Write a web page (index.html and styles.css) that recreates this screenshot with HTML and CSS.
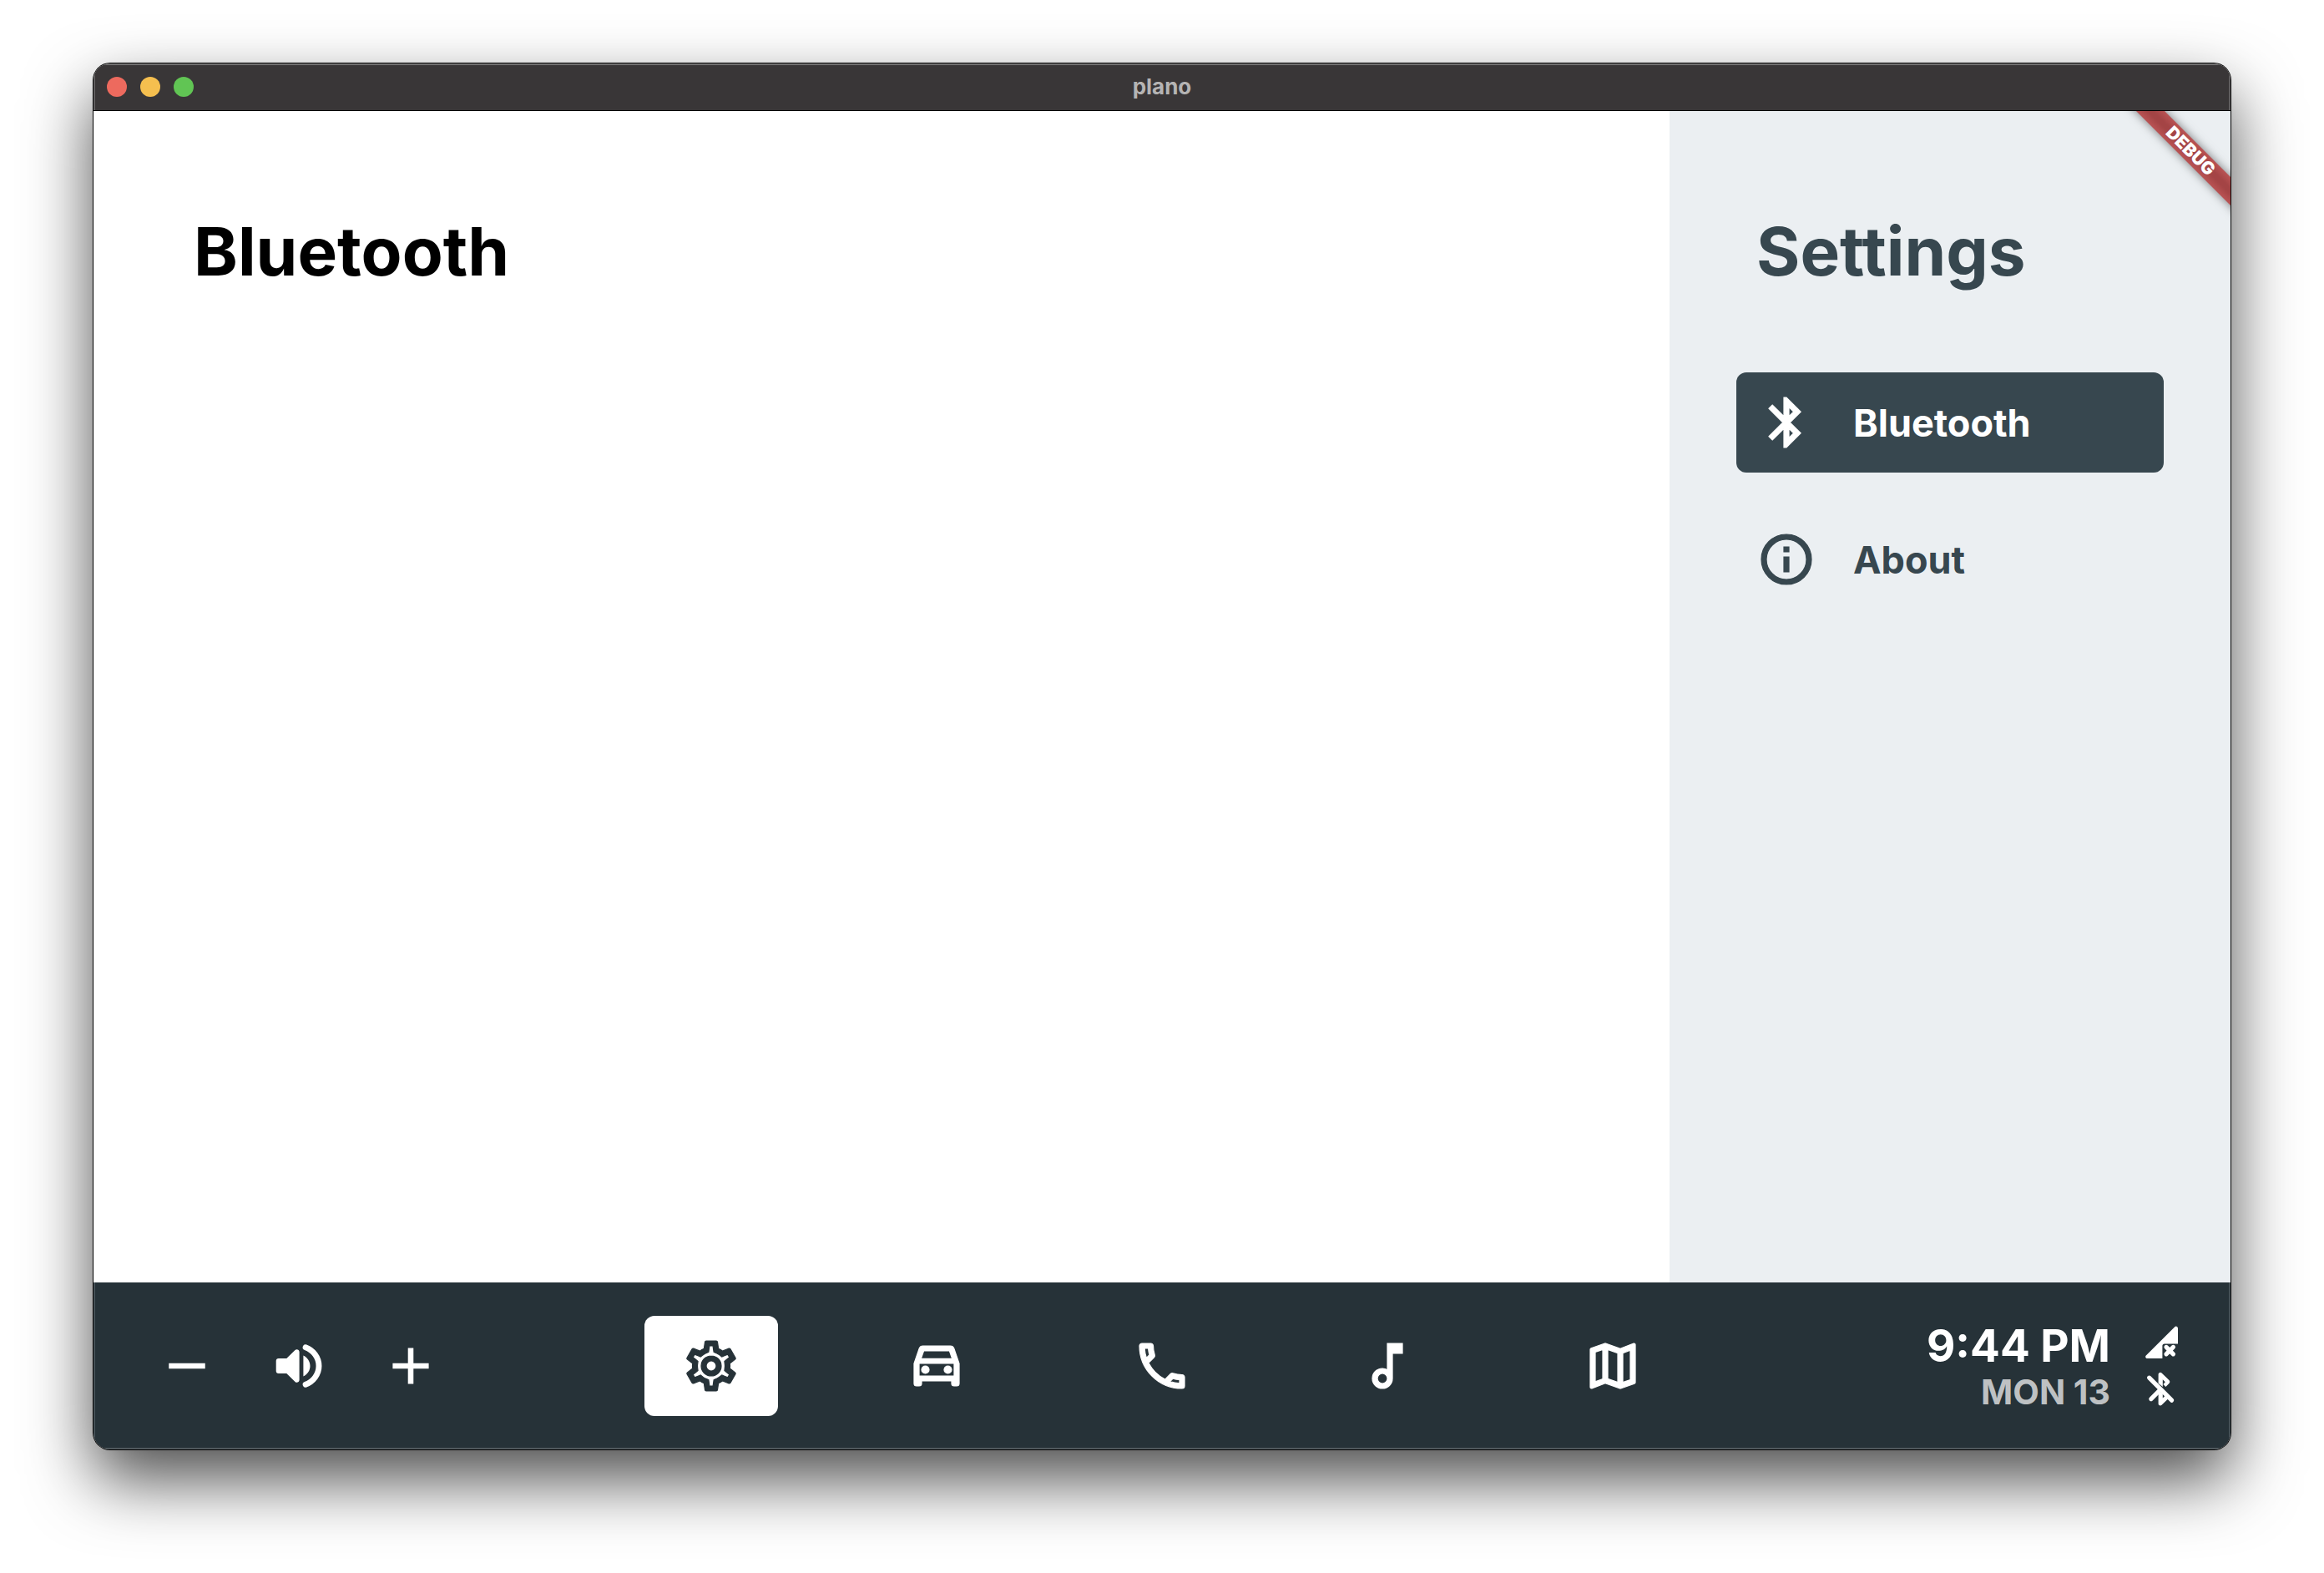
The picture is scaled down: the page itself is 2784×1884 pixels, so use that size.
FILE: index.html
```html
<!DOCTYPE html>
<html lang="en">
<head>
<meta charset="utf-8">
<title>plano</title>
<link rel="stylesheet" href="styles.css">
</head>
<body>
<div class="window">
  <header class="titlebar">
    <div class="lights">
      <button class="light close" aria-label="Close"></button>
      <button class="light minimize" aria-label="Minimize"></button>
      <button class="light zoom" aria-label="Zoom"></button>
    </div>
    <span class="title">plano</span>
  </header>
  <div class="body">
    <main class="content">
      <h1 class="heading">Bluetooth</h1>
    </main>
    <aside class="sidebar">
      <h2 class="heading">Settings</h2>
      <nav class="menu">
        <button class="item active">
          <svg class="icon bold" viewBox="0 0 24 24"><path d="M17.71 7.71L12 2h-1v7.590L6.410 5 5 6.410 10.590 12 5 17.590 6.410 19 11 14.410V22h1l5.710-5.710-4.300-4.290 4.300-4.290zM13 5.830l1.880 1.880L13 9.590V5.830zm1.880 10.460L13 18.170v-3.760l1.880 1.880z"/></svg>
          Bluetooth
        </button>
        <button class="item">
          <svg class="icon bold" viewBox="0 0 24 24"><path d="M11 7h2v2h-2zm0 4h2v6h-2zm1-9C6.480 2 2 6.480 2 12s4.480 10 10 10 10-4.480 10-10S17.520 2 12 2zm0 18c-4.410 0-8-3.590-8-8s3.590-8 8-8 8 3.590 8 8-3.590 8-8 8z"/></svg>
          About
        </button>
      </nav>
    </aside>
    <div class="corner"><span class="ribbon">DEBUG</span></div>
  </div>
  <footer class="dock">
    <div class="volume">
      <button class="key" aria-label="Volume down"><svg class="icon" viewBox="0 0 24 24"><path d="M4.750 10.900h14.500v2.200H4.750z"/></svg></button>
      <button class="key" aria-label="Mute"><svg class="icon" viewBox="0 0 24 24"><path d="M2.900 10v4c0 .6.400 1 1 1h3.200l3.400 3.300c.6.600 1.700.200 1.700-.7V6.400c0-.9-1.100-1.300-1.700-.7L7.100 9H3.900c-.6 0-1 .4-1 1zM16.500 12c0-1.800-1-3.300-2.700-4.200v8.400c1.700-.9 2.700-2.400 2.700-4.200z"/><path class="stroke" d="M14.700 4.600c3 1.100 5.300 4 5.300 7.400s-2.300 6.300-5.300 7.400"/></svg></button>
      <button class="key" aria-label="Volume up"><svg class="icon" viewBox="0 0 24 24"><path d="M4.800 10.900h6.100V4.800h2.200v6.100h6.100v2.200h-6.100v6.100h-2.200v-6.100H4.800z"/></svg></button>
    </div>
    <nav class="apps">
      <button class="app active" aria-label="Settings"><svg class="icon bold" viewBox="0 0 24 24"><path d="M19.430 12.980c.04-.32.070-.64.070-.98s-.03-.66-.07-.98l2.110-1.650c.19-.15.240-.42.120-.64l-2-3.460c-.09-.16-.26-.25-.44-.25-.06 0-.12.010-.17.030l-2.490 1c-.52-.4-1.080-.73-1.690-.98l-.38-2.650C14.460 2.180 14.250 2 14 2h-4c-.25 0-.46.180-.49.420l-.38 2.650c-.61.250-1.170.590-1.690.980l-2.490-1c-.06-.02-.12-.03-.18-.03-.17 0-.34.090-.43.250l-2 3.460c-.13.220-.07.490.120.640l2.110 1.650c-.04.320-.07.650-.07.980s.03.660.070.980l-2.110 1.650c-.19.150-.24.420-.12.640l2 3.460c.09.160.260.250.440.250.06 0 .12-.01.170-.03l2.490-1c.52.400 1.080.730 1.690.980l.38 2.650c.03.240.240.420.490.420h4c.25 0 .46-.18.490-.42l.38-2.650c.61-.25 1.170-.59 1.690-.98l2.490 1c.06.020.120.030.180.030.17 0 .34-.09.430-.25l2-3.460c.12-.22.070-.49-.12-.64l-2.110-1.650zm-1.980-1.710c.04.310.050.520.050.730s-.02.430-.05.730l-.14 1.130.890.700 1.080.840-.7 1.210-1.270-.51-1.040-.42-.9.680c-.43.320-.84.560-1.250.730l-1.060.430-.16 1.130-.2 1.350h-1.400l-.19-1.350-.16-1.130-1.060-.43c-.43-.18-.83-.41-1.230-.71l-.91-.7-1.060.430-1.270.510-.7-1.210 1.080-.84.890-.7-.14-1.130c-.03-.31-.05-.54-.05-.74s.02-.43.050-.73l.14-1.130-.89-.7-1.080-.84.700-1.210 1.270.510 1.040.420.900-.68c.43-.32.840-.56 1.250-.73l1.060-.43.160-1.130.2-1.350h1.390l.19 1.350.16 1.130 1.060.430c.43.180.830.410 1.230.710l.91.700 1.060-.43 1.270-.51.700 1.210-1.070.850-.89.700.14 1.130zM12 8c-2.210 0-4 1.790-4 4s1.790 4 4 4 4-1.790 4-4-1.790-4-4-4zm0 6c-1.100 0-2-.9-2-2s.9-2 2-2 2 .9 2 2-.9 2-2 2z"/></svg></button>
      <button class="app" aria-label="Car"><svg class="icon bold" viewBox="0 0 24 24"><path d="M18.920 5.010C18.720 4.420 18.160 4 17.500 4h-11c-.66 0-1.210.420-1.420 1.010L3 11v8c0 .55.450 1 1 1h1c.55 0 1-.45 1-1v-1h12v1c0 .55.450 1 1 1h1c.55 0 1-.45 1-1v-8l-2.080-5.990zM6.850 6h10.290l1.080 3.110H5.770L6.850 6zM19 16H5v-5h14v5z"/><circle cx="7.500" cy="13.500" r="1.500"/><circle cx="16.500" cy="13.500" r="1.500"/></svg></button>
      <button class="app" aria-label="Phone"><svg class="icon bold" viewBox="0 0 24 24"><path d="M6.540 5c.06.890.210 1.760.450 2.590l-1.200 1.200c-.41-1.200-.67-2.470-.76-3.790h1.510m9.860 12.020c.85.240 1.720.390 2.600.450v1.490c-1.320-.09-2.590-.35-3.800-.75l1.200-1.190M7.500 3H4c-.55 0-1 .45-1 1 0 9.390 7.610 17 17 17 .55 0 1-.45 1-1v-3.490c0-.55-.45-1-1-1-1.240 0-2.450-.2-3.570-.57-.1-.04-.21-.05-.31-.05-.26 0-.51.100-.71.290l-2.200 2.200c-2.830-1.450-5.150-3.760-6.590-6.590l2.200-2.200c.28-.28.360-.67.250-1.020C8.700 6.450 8.500 5.250 8.500 4c0-.55-.45-1-1-1z"/></svg></button>
      <button class="app" aria-label="Music"><svg class="icon bold" viewBox="0 0 24 24"><path d="M12 3l.01 10.550c-.59-.34-1.270-.55-2-.55C7.790 13 6 14.790 6 17s1.790 4 4.010 4S14 19.210 14 17V7h4V3h-6zm-1.990 16c-1.100 0-2-.9-2-2s.9-2 2-2 2 .9 2 2-.9 2-2 2z"/></svg></button>
      <button class="app" aria-label="Map"><svg class="icon bold" viewBox="0 0 24 24"><path d="M20.500 3l-.16.030L15 5.100 9 3 3.360 4.900c-.21.070-.36.250-.36.480V20.500c0 .28.220.5.500.5l.16-.03L9 18.900l6 2.100 5.640-1.900c.21-.07.360-.25.360-.48V3.500c0-.28-.22-.5-.5-.5zM10 5.470l4 1.400v11.660l-4-1.400V5.470zm-5 .990l3-1.010v11.700l-3 1.160V6.460zm14 11.080l-3 1.010V6.860l3-1.160v11.840z"/></svg></button>
    </nav>
    <div class="status">
      <div class="clock">
        <span class="time">9:44 PM</span>
        <span class="date">MON 13</span>
      </div>
      <div class="signals">
        <svg class="small" viewBox="0 0 24 24"><path d="M22.500 12.700V3.500c0-1.100-1.200-1.600-1.900-.9L3.400 19.700c-.7.700-.2 1.800.8 1.800h9v-7.600c0-.7.500-1.200 1.200-1.200z"/><path class="stroke" d="M15.500 14.700l4.200 4.200M19.700 14.700l-4.200 4.200"/></svg>
        <svg class="small" viewBox="0 0 24 24"><path class="stroke" d="M5.300 5.100L18.800 18.600M6.400 17.800L12 12.200"/><path d="M10.800 13v7.600c0 1 1.300 1.500 2 .8l4.400-4.300-1.800-1.800-2 2v-2.900zM10.800 8.400V3c0-1 1.300-1.600 2-.8l4.400 4.300c.6.600.6 1.400 0 2l-2 2-1.500-1.500L14.900 7.600l-1.500-1.500v4.400z"/></svg>
      </div>
    </div>
  </footer>
</div>
</body>
</html>
```
FILE: styles.css
```css
* { box-sizing: border-box; }
body {
  margin: 0;
  min-height: 100vh;
  padding: 76px 112px 148px;
  display: flex;
  background: #fff;
  font-family: Inter, "Liberation Sans", sans-serif;
  font-weight: 700;
}
button {
  border: 0;
  padding: 0;
  background: none;
  color: inherit;
  font: inherit;
}
h1, h2 { margin: 0; }
svg { display: block; fill: currentColor; }
.stroke {
  fill: none;
  stroke: currentColor;
  stroke-width: 2.6;
  stroke-linecap: round;
}
.window {
  position: relative;
  flex: 1;
  display: flex;
  flex-direction: column;
  border-radius: 20px;
  overflow: hidden;
  box-shadow: 0 0 0 1px #000, 0 36px 80px rgba(0, 0, 0, .7);
}
.titlebar {
  display: grid;
  grid-template-columns: 1fr auto 1fr;
  align-items: center;
  height: 57px;
  padding: 0 16px;
  background: #393637;
  border-bottom: 1px solid #000;
  box-shadow: inset 0 2px #717070, inset 2px 0 #605e5f, inset -2px 0 #605e5f;
  color: #b5b4b4;
  font-size: 26px;
}
.title { padding-bottom: 2px; }
.lights { display: flex; gap: 16px; }
.light { width: 24px; height: 24px; border-radius: 50%; }
.close { background: #ed6a5e; }
.minimize { background: #f5bf4f; }
.zoom { background: #61c554; }
.body {
  position: relative;
  flex: 1;
  display: flex;
}
.content {
  flex: 1;
  padding: 120px;
  background: #fff;
  color: #000;
}
.sidebar {
  width: 672px;
  padding: 120px 80px;
  background: #ebeff2;
  color: #37474f;
}
.heading {
  font-size: 80px;
  line-height: 96px;
  font-weight: 700;
}
.sidebar .heading { padding-left: 24px; }
.menu {
  display: flex;
  flex-direction: column;
  gap: 44px;
  margin-top: 97px;
}
.item {
  display: flex;
  align-items: center;
  gap: 44px;
  height: 120px;
  padding: 0 24px;
  border-radius: 12px;
  font-size: 45px;
}
.item.active { background: #37474f; color: #fff; }
.icon { width: 72px; height: 72px; }
.bold { stroke: currentColor; stroke-width: .4; }
.corner {
  position: absolute;
  top: 0;
  right: 0;
  width: 160px;
  height: 160px;
  overflow: hidden;
}
.ribbon {
  position: absolute;
  top: 36px;
  right: -52px;
  width: 200px;
  transform: rotate(45deg);
  background: linear-gradient(#b95354, #a44445 40%, #a44445 60%, #b95354);
  box-shadow: 0 0 12px rgba(0, 0, 0, .5);
  color: #fff;
  font-size: 21px;
  line-height: 24px;
  font-weight: 900;
  text-align: center;
}
.dock {
  display: grid;
  grid-template-columns: 1fr auto 1fr;
  align-items: center;
  height: 200px;
  padding: 0 60px;
  background: #263238;
  box-shadow: inset 0 -2px #50595e, inset 2px 0 #455056, inset -2px 0 #455056;
  color: #fff;
}
.volume { display: flex; gap: 62px; padding-left: 16px; }
.volume .stroke { stroke-width: 2.3; }
.apps { display: flex; gap: 110px; }
.app {
  display: grid;
  place-items: center;
  width: 160px;
  height: 120px;
  border-radius: 12px;
}
.app.active { background: #fff; color: #263238; }
.status { display: flex; justify-content: flex-end; align-items: center; gap: 36px; }
.clock { display: flex; flex-direction: column; text-align: right; }
.time { font-size: 53px; line-height: 62px; }
.date { font-size: 41px; line-height: 48px; color: #bec1c3; }
.signals { display: flex; flex-direction: column; gap: 8px; }
.small { width: 48px; height: 48px; }
```
